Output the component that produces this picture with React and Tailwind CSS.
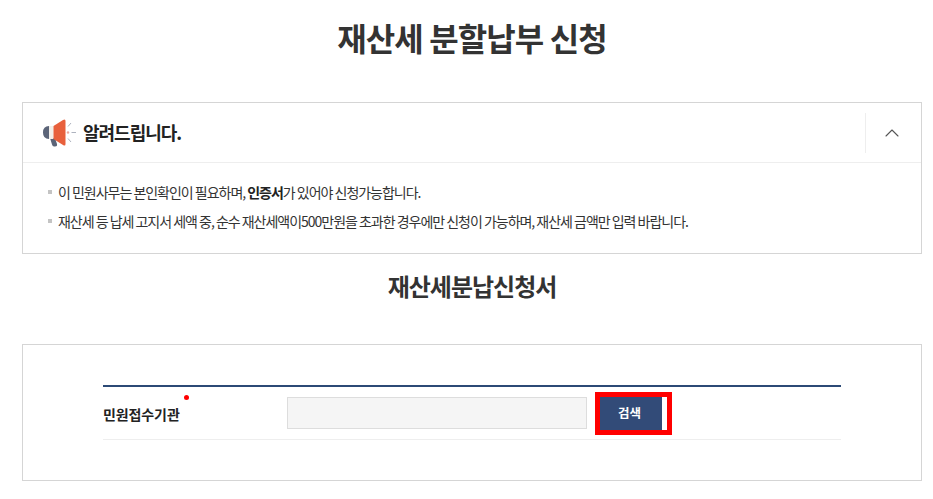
import { ChevronUp } from "lucide-react";

const font = { fontFamily: '"Noto Sans CJK KR", "Noto Sans", sans-serif' };

const notices = [
  <>이 민원사무는 본인확인이 필요하며, <b className="font-bold text-[#222]">인증서</b>가 있어야 신청가능합니다.</>,
  <>재산세 등 납세 고지서 세액 중, 순수 재산세액이500만원을 초과한 경우에만 신청이 가능하며, 재산세 금액만 입력 바랍니다.</>,
];

const Megaphone = () => (
  <svg width="34" height="30" viewBox="0 0 34 30" className="shrink-0">
    <path d="M7 20 L12 20 L14 26 Q14.5 28.5 12 28.5 L11 28.5 Q9.5 28.5 9 26.5 Z" fill="#5b6478" />
    <path d="M6 8 L6 21 Q0 21 0 14.5 Q0 8 6 8 Z" fill="#5b6478" />
    <rect x="6" y="8" width="4.5" height="13" fill="#f3efe9" />
    <path d="M10.5 8 L20 2 Q22.5 0.5 22.5 3 L22.5 26 Q22.5 28.5 20 27 L10.5 21 Z" fill="#e8603c" />
    <circle cx="25" cy="14.5" r="1.2" fill="#e9a9a0" />
    <path d="M25 8.5 L28 5 M28.5 14.5 L33 14.5 M25 20.5 L28 24" stroke="#aeb3bf" strokeWidth="1" fill="none" />
  </svg>
);

export default function App() {
  return (
    <div className="w-[933px] h-[499px] overflow-hidden bg-white text-[#333]" style={font}>
      <h1 className="h-[102px] pl-[11px] pt-[13px] text-center text-[32px] leading-[48px] font-bold tracking-[-0.9px] text-[#333]">
        재산세 분할납부 신청
      </h1>

      <section className="mx-[22px] w-[900px] h-[152px] border border-[#d5d5d5]">
        <div className="h-[60px] flex items-center border-b border-[#eeeeee]">
          <div className="flex-1 flex items-center pl-[20px] gap-[6px]">
            <Megaphone />
            <span className="text-[18px] font-bold tracking-[-1px] text-[#222]">알려드립니다.</span>
          </div>
          <div className="w-[56px] h-[40px] border-l border-[#eeeeee] flex items-center justify-center">
            <ChevronUp size={24} strokeWidth={1.1} className="text-[#555] -ml-[3px]" />
          </div>
        </div>
        <ul className="pt-[18px] pl-[25px]">
          {notices.map((n, i) => (
            <li key={i} className="h-[29px] flex items-start gap-[6px] text-[14px] leading-[22px] tracking-[-1.02px] text-[#333]">
              <span className="mt-[9px] w-[4px] h-[4px] bg-[#c4c4c4] shrink-0" />
              <span>{n}</span>
            </li>
          ))}
        </ul>
      </section>

      <h2 className="h-[90px] pl-[11px] pt-[14px] text-center text-[24px] leading-[36px] font-bold tracking-[-1px] text-[#333]">
        재산세분납신청서
      </h2>

      <section className="mx-[22px] w-[900px] h-[137px] border border-[#d5d5d5] px-[80px] pt-[40px]">
        <div className="h-[55px] border-t-2 border-[#2c4a76] border-b border-b-[#eeeeee] flex items-center">
          <div className="w-[184px] relative text-[14px] font-bold tracking-[-0.1px] text-[#222] pt-[2px]">
            <span>민원접수기관</span>
            <span className="absolute left-[81px] top-[-7px] w-[5px] h-[5px] rounded-full bg-[#ff0000]" />
          </div>
          <div className="w-[300px] h-[32px] bg-[#f5f5f5] border border-[#dddddd]" />
          <div className="ml-[8px] border-[5px] border-[#ff0000] pr-[5px] bg-white">
            <button className="block w-[62px] h-[33px] pr-[3px] bg-[#324b78] text-white text-[12.5px] font-bold">검색</button>
          </div>
        </div>
      </section>
    </div>
  );
}
